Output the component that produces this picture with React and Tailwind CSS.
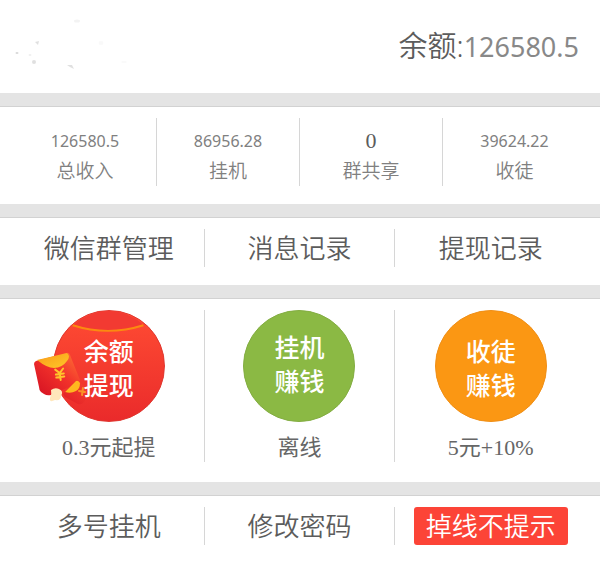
import React, { useState } from "react";
import clsx from "clsx";

const stats = [
  { label: "总收入", value: "126580.5" },
  { label: "挂机", value: "86956.28" },
  { label: "群共享", value: "0", plain: true },
  { label: "收徒", value: "39624.22" },
];

const records = ["微信群管理", "消息记录", "提现记录"];

const actions = [
  {
    lines: ["余额", "提现"],
    note: "0.3元起提",
    color: "bg-linear-to-b from-[#ff4b33] to-[#ea2a2b] border-[#e0372f] pt-1",
    packet: true,
  },
  {
    lines: ["挂机", "赚钱"],
    note: "离线",
    color: "bg-[#8bb944] border-[#83ad42] pb-1",
  },
  {
    lines: ["收徒", "赚钱"],
    note: "5元+10%",
    color: "bg-[#fb9713] border-[#f08f16] pt-1",
  },
];

const Section = ({ children, className }) => (
  <section
    className={clsx("border-t border-[#d2d2d2] bg-white px-[14px]", className)}
  >
    {children}
  </section>
);

const Arc = () => (
  <svg
    viewBox="0 0 112 112"
    className="absolute inset-0 h-full w-full"
    aria-hidden="true"
  >
    <path
      d="M20 14 Q55 26 91 14 Q75 0 56 0 Q36 0 20 14Z"
      fill="#f23a32"
    />
    <path
      d="M19 14.500 Q55 26 91 14.500"
      fill="none"
      stroke="#fb8a10"
      strokeWidth="2"
    />
  </svg>
);

const RedPackets = () => (
  <svg
    viewBox="0 0 58 56"
    className="absolute top-[39px] -left-5 h-14 w-[58px]"
    aria-hidden="true"
  >
    <defs>
      <linearGradient id="big" x1="0" y1="1" x2="1" y2="0">
        <stop offset="0" stopColor="#d30f22" />
        <stop offset=".55" stopColor="#f2322b" />
        <stop offset="1" stopColor="#ff7a35" />
      </linearGradient>
      <linearGradient id="small" x1="0" y1="1" x2="1" y2="0">
        <stop offset="0" stopColor="#e01c26" />
        <stop offset="1" stopColor="#f8452f" />
      </linearGradient>
      <linearGradient id="flap" x1="0" y1="0" x2="1" y2="1">
        <stop offset="0" stopColor="#f99a19" />
        <stop offset="1" stopColor="#ffc928" />
      </linearGradient>
    </defs>
    <path
      d="M2 11 L32 3 Q35 2 36 5 L46 30 Q46 32 44 33 L17 45 Q13 46 10 44 L7 42 Q5 40 5 37 L0 14 Q0 12 2 11Z"
      fill="url(#big)"
    />
    <path
      d="M3 10 L33 3 Q37 6 33 11 Q28 18 20 18 Q13 18 3 10Z"
      fill="url(#flap)"
    />
    <g
      fill="none"
      stroke="#ffc42c"
      strokeWidth="2"
      strokeLinecap="round"
      transform="rotate(-8 26 25)"
    >
      <path d="M22 19 L26 23 L30 19 M26 23 V30 M22 24 H30 M22 27 H30" />
    </g>
    <path
      d="M29 44 L41 31 Q43 29 46 32 L56 42 Q57 44 55 46 L49 53 Q47 55 44 54 L31 47Z"
      fill="url(#small)"
    />
    <path d="M31 42 L42 31 Q44 30 46 33 Q46 39 42 41 Q37 44 31 42Z" fill="#ffb71f" />
    <path
      d="M45 41 L51 42 M49 38 L48 45"
      stroke="#fb8f25"
      strokeWidth="2"
      strokeLinecap="round"
    />
    <path
      d="M17 40 Q21 37 25 39 Q30 41 27 46 Q27 51 21 50 Q15 53 16 48 Q18 44 17 40Z"
      fill="#ffe7bb"
    />
  </svg>
);

const Specks = () => (
  <svg
    viewBox="0 0 140 92"
    className="h-[92px] w-[140px]"
    fill="#d8d8d8"
    aria-hidden="true"
  >
    <ellipse cx="17" cy="53" rx="1.500" ry="1" />
    <ellipse cx="30" cy="55" rx="1.500" ry="1" opacity=".4" />
    <path d="M35 42 L39 41 L38 45Z" opacity=".8" />
    <ellipse cx="34" cy="62" rx="2" ry="2" opacity=".8" />
    <path d="M67 65 L72 65 L74 69 L70 67Z" opacity=".8" />
    <ellipse cx="77" cy="21" rx="3" ry="1.500" opacity=".3" />
    <ellipse cx="101" cy="43" rx="2.500" ry="2" opacity=".15" />
    <ellipse cx="124" cy="62" rx="3" ry="1" opacity=".15" />
  </svg>
);

const App = () => {
  const [silent, setSilent] = useState(true);

  return (
    <main className="flex w-full flex-col gap-[13px] bg-[#e4e4e4] font-['Noto_Sans','Noto_Sans_CJK_SC',sans-serif] font-[350] text-[#5c5c5c]">
      <header className="flex items-center justify-between bg-white pr-[21px] pb-px">
        <Specks />
        <p className="text-[29px] leading-10">
          余额:
          <span className="text-[27px] font-normal text-[#888888]">
            126580.5
          </span>
        </p>
      </header>

      <Section className="pt-[11px] pb-[18px]">
        <dl className="grid grid-cols-4 divide-x divide-[#d6d6d6]">
          {stats.map((item) => (
            <div
              key={item.label}
              className="flex h-[68px] flex-col-reverse items-center justify-center pt-2 text-[#808080]"
            >
              <dt className="text-[19px] leading-[30px]">{item.label}</dt>
              <dd
                className={clsx(
                  "leading-[30px] font-normal",
                  item.plain
                    ? "font-['Liberation_Serif',serif] text-[22px] text-[#5c5c5c]"
                    : "text-[16px]"
                )}
              >
                {item.value}
              </dd>
            </div>
          ))}
        </dl>
      </Section>

      <Section className="pt-[11px] pb-[18px]">
        <nav className="grid grid-cols-3 divide-x divide-[#d6d6d6]">
          {records.map((text) => (
            <a
              key={text}
              href="#"
              className="text-center text-[26px] leading-[38px]"
            >
              {text}
            </a>
          ))}
        </nav>
      </Section>

      <Section className="pt-[11px] pb-5">
        <div className="grid grid-cols-3 divide-x divide-[#d6d6d6]">
          {actions.map((item) => (
            <div key={item.note} className="flex flex-col items-center">
              <button
                type="button"
                className={clsx(
                  "relative flex h-28 w-28 cursor-pointer flex-col items-center justify-center rounded-full border text-[25px] leading-[34px] font-medium text-white",
                  item.color
                )}
              >
                {item.packet && <Arc />}
                {item.packet && <RedPackets />}
                {item.lines.map((line) => (
                  <span key={line} className="relative">
                    {line}
                  </span>
                ))}
              </button>
              <p className="pt-3 font-['Liberation_Serif','Noto_Sans_CJK_SC',serif] text-[22px] leading-7 font-normal text-[#666666]">
                {item.note}
              </p>
            </div>
          ))}
        </div>
      </Section>

      <Section className="pt-[11px] pb-[19px]">
        <div className="grid grid-cols-3 divide-x divide-[#d6d6d6] text-[26px] leading-[38px]">
          <a href="#" className="text-center">
            多号挂机
          </a>
          <a href="#" className="text-center">
            修改密码
          </a>
          <div className="flex justify-center">
            <button
              type="button"
              aria-pressed={silent}
              onClick={() => setSilent(!silent)}
              className="cursor-pointer rounded-[3px] bg-[#fc4437] px-3 text-white"
            >
              掉线不提示
            </button>
          </div>
        </div>
      </Section>
    </main>
  );
};

export default App;
